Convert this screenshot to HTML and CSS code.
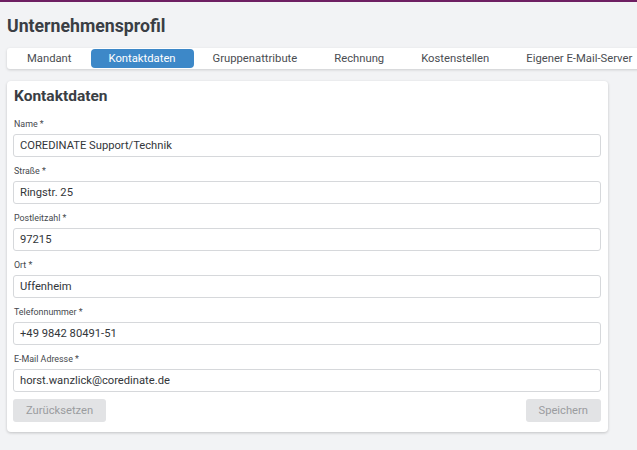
FILE: index.html
```html
<!DOCTYPE html>
<html lang="de">
<head>
<meta charset="utf-8">
<title>Unternehmensprofil</title>
<link rel="stylesheet" href="styles.css">
</head>
<body>
<div class="page">
  <h1 class="title">Unternehmensprofil</h1>
  <nav class="tabs">
    <span class="tab">Mandant</span>
    <span class="tab active">Kontaktdaten</span>
    <span class="tab">Gruppenattribute</span>
    <span class="tab">Rechnung</span>
    <span class="tab">Kostenstellen</span>
    <span class="tab">Eigener E-Mail-Server</span>
  </nav>
  <section class="card">
    <h2 class="card-title">Kontaktdaten</h2>
    <div class="fields">
      <div class="field">
        <label class="label">Name *</label>
        <div class="input">COREDINATE Support/Technik</div>
      </div>
      <div class="field">
        <label class="label">Straße *</label>
        <div class="input">Ringstr. 25</div>
      </div>
      <div class="field">
        <label class="label">Postleitzahl *</label>
        <div class="input">97215</div>
      </div>
      <div class="field">
        <label class="label">Ort *</label>
        <div class="input">Uffenheim</div>
      </div>
      <div class="field">
        <label class="label">Telefonnummer *</label>
        <div class="input">+49 9842 80491-51</div>
      </div>
      <div class="field">
        <label class="label">E-Mail Adresse *</label>
        <div class="input">horst.wanzlick@coredinate.de</div>
      </div>
    </div>
    <div class="actions">
      <span class="btn">Zurücksetzen</span>
      <span class="btn">Speichern</span>
    </div>
  </section>
</div>
</body>
</html>
```
FILE: styles.css
```css
html, body {
  margin: 0;
  padding: 0;
}
body {
  background: #f2f3f5;
  border-top: 2px solid #6e1f62;
  font-family: Roboto, "Liberation Sans", Arial, sans-serif;
  color: #3c3f44;
  overflow: hidden;
  height: 448px;
}
.page {
  padding: 12px 0 0 7px;
}
.title {
  margin: 0;
  font-size: 17.7px;
  line-height: 24px;
  font-weight: 700;
  color: #3a3e44;
}
.tabs {
  margin-top: 10px;
  display: flex;
  width: max-content;
  gap: 1px;
  padding: 1px 2px;
  background: #fff;
  border-radius: 3px 0 0 3px;
  box-shadow: 0 1px 3px rgba(0,0,0,0.16);
}
.tab {
  padding: 0 18px;
  font-size: 11.25px;
  line-height: 19px;
  color: #4a4d52;
  border-radius: 4px;
  white-space: nowrap;
}
.tab.active {
  background: #3d88c8;
  color: #fff;
}
.card {
  margin-top: 12px;
  width: 588px;
  padding: 5px 7px 10px 6px;
  background: #fff;
  border-radius: 4px;
  box-shadow: 0 1px 3px rgba(0,0,0,0.2);
}
.card-title {
  margin: 0 0 12px 1px;
  font-size: 15.5px;
  line-height: 20px;
  font-weight: 700;
  color: #3a3e44;
}
.fields {
  display: flex;
  flex-direction: column;
  gap: 8px;
}
.field {
  display: flex;
  flex-direction: column;
  gap: 4px;
}
.label {
  font-size: 8.9px;
  line-height: 12px;
  color: #45484d;
  padding-left: 1px;
}
.input {
  height: 21px;
  border: 1px solid #d6d8db;
  border-radius: 3px;
  padding: 0 6px;
  font-size: 11.2px;
  line-height: 21px;
  color: #33363a;
}
.actions {
  margin-top: 7px;
  display: flex;
  justify-content: space-between;
}
.btn {
  height: 23px;
  line-height: 23px;
  padding: 0 13px;
  font-size: 11.2px;
  background: #e2e3e5;
  color: #9a9c9f;
  border-radius: 3px;
}
```
